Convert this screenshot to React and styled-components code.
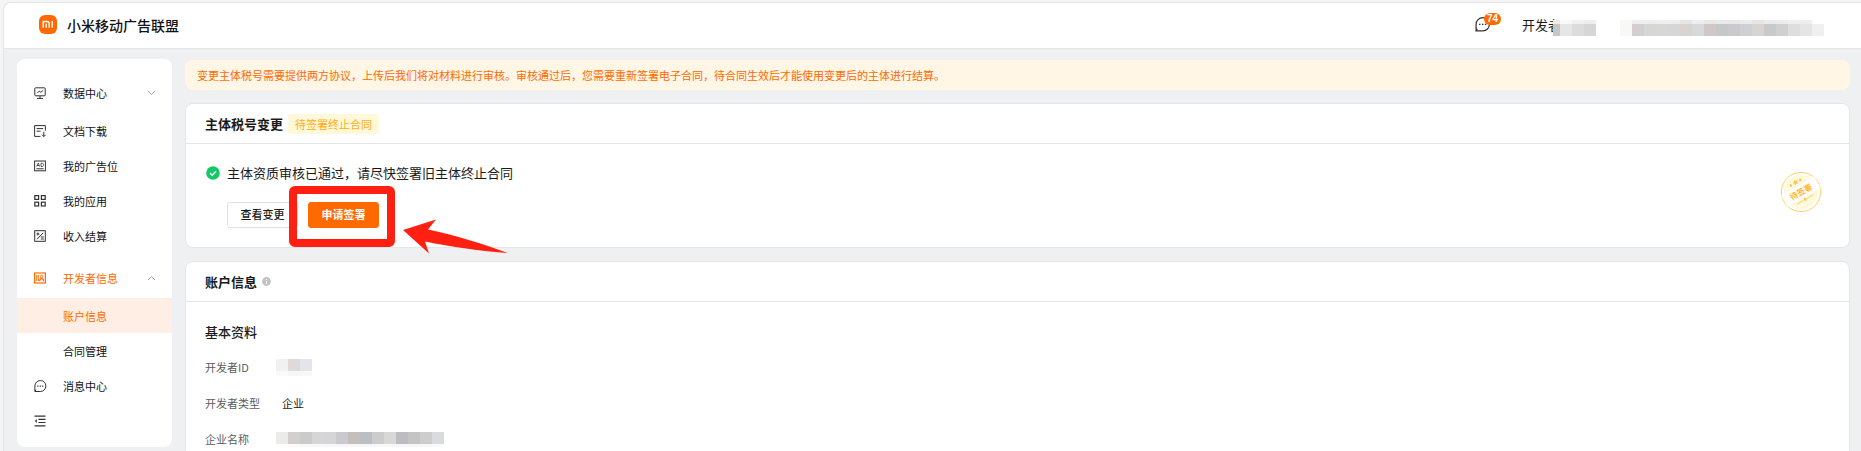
import React, { useState } from "react";
import styled, { createGlobalStyle } from "styled-components";

const GlobalStyle = createGlobalStyle`
  * {
    box-sizing: border-box;
  }
  body {
    margin: 0;
    background: #f5f5f6;
    color: #1a1a1a;
    font-family: "Noto Sans CJK SC", "Noto Sans", sans-serif;
    font-size: 11px;
    line-height: 16px;
  }
  h1, h2, h3, p, ul, dl, dd {
    margin: 0;
    padding: 0;
  }
  button {
    font-family: inherit;
    cursor: pointer;
  }
`;

const Shell = styled.div`
  display: flex;
  flex-direction: column;
  height: 100vh;
  padding: 2px 0 0 3px;
  overflow: hidden;
`;

const Window = styled.div`
  display: flex;
  flex: 1;
  flex-direction: column;
  min-height: 0;
  overflow: hidden;
  background: #eff0f2;
  border: solid #e4e4e6;
  border-width: 1px 0 0 1px;
  border-top-left-radius: 8px;
`;

const Header = styled.header`
  display: flex;
  flex: none;
  align-items: center;
  justify-content: space-between;
  height: 46px;
  padding: 0 37px 2px 35px;
  background: #fff;
  border-bottom: 1px solid #e4e5e7;
`;

const Brand = styled.a`
  display: flex;
  align-items: center;
  gap: 10px;
  color: #111;
  text-decoration: none;
`;

const BrandName = styled.h1`
  font-size: 14px;
  font-weight: 500;
  line-height: 20px;
`;

const HeaderTools = styled.div`
  display: flex;
  align-items: center;
`;

const MessageButton = styled.button`
  position: relative;
  display: flex;
  padding: 0;
  margin-right: 32px;
  color: #333;
  background: none;
  border: 0;
`;

const Badge = styled.span`
  position: absolute;
  top: -4px;
  left: 9px;
  padding: 0 3px;
  border-radius: 6px;
  background: #ff6a00;
  color: #fff;
  font-family: "Liberation Sans", sans-serif;
  font-size: 10px;
  font-weight: 700;
  line-height: 12px;
`;

const Account = styled.div`
  display: flex;
  align-items: center;
  font-size: 13px;

  svg {
    margin-top: 6px;
    margin-left: -8px;
  }
`;

const Company = styled.div`
  display: flex;
  margin-top: 6px;
  margin-left: 24px;
`;

const Body = styled.div`
  display: flex;
  flex: 1;
  align-items: flex-start;
  gap: 13px;
  min-height: 0;
  padding: 10px 11px 0 13px;
`;

const Sidebar = styled.nav`
  flex: none;
  width: 155px;
  padding: 9px 0;
  background: #fff;
  border-radius: 8px;

  ul {
    list-style: none;
  }
`;

const NavGroup = styled.button`
  display: flex;
  align-items: center;
  gap: 17px;
  width: 100%;
  height: 41px;
  margin-top: 4px;
  padding: 0 16px 0 17px;
  border: 0;
  background: none;
  color: ${(props) => (props.$active ? "#ff6a00" : "#111")};
  font-size: 11px;
  text-align: left;

  span {
    flex: 1;
  }
`;

const NavLink = styled.a`
  display: flex;
  align-items: center;
  gap: 17px;
  height: 35px;
  padding-top: 1px;
  padding-left: ${(props) => (props.$sub ? "46px" : "17px")};
  background: ${(props) => (props.$active ? "#ffeee4" : "transparent")};
  color: ${(props) => (props.$active ? "#ff6a00" : "#111")};
  text-decoration: none;
`;

const NavIcon = styled.svg`
  flex: none;
  width: 12px;
  height: 12px;
  overflow: visible;
  color: ${(props) => (props.$active ? "#ff6a00" : "#333")};
`;

const CollapseButton = styled.button`
  display: flex;
  align-items: center;
  width: 100%;
  height: 35px;
  padding: 0 17px;
  border: 0;
  background: none;
`;

const Main = styled.main`
  display: flex;
  flex: 1;
  flex-direction: column;
  align-self: stretch;
  gap: 13px;
  min-width: 0;
`;

const Notice = styled.p`
  flex: none;
  margin-top: 1px;
  padding: 7px 12px;
  border-radius: 8px;
  background: #fff6e6;
  color: #ff6a00;
`;

const Card = styled.section`
  flex: none;
  background: #fff;
  border: 1px solid #e4e5e7;
  border-radius: 8px;
`;

const CardHeader = styled.div`
  display: flex;
  align-items: center;
  gap: 5px;
  height: 40px;
  padding: 0 19px;
  border-bottom: 1px solid #e4e5e7;
`;

const CardTitle = styled.h2`
  font-size: 13px;
  font-weight: 700;
  line-height: 20px;
`;

const Tag = styled.span`
  padding: 2px 7px;
  border-radius: 3px;
  background: #fff8db;
  color: #ffae0d;
`;

const ReviewBody = styled.div`
  display: flex;
  align-items: flex-start;
  justify-content: space-between;
  padding: 19px 27px 19px 20px;
`;

const Status = styled.p`
  display: flex;
  align-items: center;
  gap: 7px;
  font-size: 13px;
  line-height: 20px;
`;

const Actions = styled.div`
  display: flex;
  gap: 10px;
  margin-top: 19px;
  padding-left: 21px;
`;

const Button = styled.button`
  min-width: 71px;
  height: 26px;
  padding: 0 12px 2px;
  border: 1px solid ${(props) => (props.$primary ? "#ff6a00" : "#dfe0e6")};
  border-radius: 3px;
  background: ${(props) => (props.$primary ? "#ff6a00" : "#fff")};
  color: ${(props) => (props.$primary ? "#fff" : "#1a1a1a")};
  font-size: 11px;
  font-weight: ${(props) => (props.$primary ? 700 : 500)};
  line-height: 16px;
`;

const Highlighted = styled.div`
  position: relative;
`;

const HighlightFrame = styled.div`
  position: absolute;
  inset: -16px -16px -19px -19px;
  border: 8px solid #ff2012;
  border-radius: 6px;
  pointer-events: none;
`;

const Arrow = styled.svg`
  position: absolute;
  top: 16px;
  left: 95px;
  z-index: 1;
  pointer-events: none;
`;

const StampBox = styled.div`
  display: flex;
  padding-top: 8px;
`;

const AccountBody = styled.div`
  padding: 20px 19px 0;
`;

const SectionTitle = styled.h3`
  margin-bottom: 7px;
  font-size: 13px;
  font-weight: 500;
  line-height: 20px;
`;

const Field = styled.div`
  display: flex;
  align-items: center;
  height: 36px;
`;

const FieldLabel = styled.dt`
  width: 71px;
  color: #5c5c5c;
`;

const FieldText = styled.dd`
  padding-left: 6px;
`;

const FieldMask = styled.dd`
  display: flex;
`;

const icons = {
  data: (
    <g fill="none" stroke="currentColor">
      <rect x=".8" y=".8" width="10.4" height="8" rx=".8" />
      <path d="M3.4 6l1.8-1.9 1.7 1.2L9.2 3.3M6 9v2M3 11.4h6" />
    </g>
  ),
  download: (
    <g fill="none" stroke="currentColor">
      <path d="M6.5 11.4H.6V.6h10.8v5M2.6 3.6h6.6M2.6 6.2h4M9.8 6.8v4.6M8 9.8l1.8 1.8 1.8-1.8" />
    </g>
  ),
  ad: (
    <g fill="none" stroke="currentColor">
      <rect x=".6" y="1" width="10.8" height="9.8" />
      <path
        d="M2.6 6.6L4.3 3l1.3 3.6M3.2 5.5h2M7 3.2v3.3h1c2 0 2-3.3 0-3.3z"
        strokeWidth=".8"
      />
      <path d="M2.4 8.8h7.2" />
    </g>
  ),
  apps: (
    <g fill="none" stroke="currentColor" strokeWidth="1.2">
      <rect x=".8" y=".6" width="3.8" height="3.8" />
      <rect x="7.4" y=".6" width="3.8" height="3.8" />
      <rect x=".8" y="7.2" width="3.8" height="3.8" />
      <rect x="7.4" y="7.2" width="3.8" height="3.8" />
    </g>
  ),
  income: (
    <g fill="none" stroke="currentColor">
      <rect x=".7" y=".7" width="10.6" height="10.6" />
      <path d="M3 9.2L9.2 2.8M2.4 4h3M3.9 2.5v3M6.8 7h3M6.8 9h3" />
    </g>
  ),
  developer: (
    <g fill="none" stroke="currentColor">
      <rect x=".6" y="1" width="10.8" height="10" strokeWidth="1.2" />
      <path d="M2.6 3v6M4.4 3v6" strokeWidth=".9" />
      <circle cx="7.6" cy="4.6" r="1.3" />
      <path d="M5.6 9.2c.2-3.4 3.8-3.4 4 0" strokeWidth="1.2" />
    </g>
  ),
  message: (
    <g fill="none" stroke="currentColor">
      <path d="M.9 11.3V6a5.5 5.5 0 1 1 5.5 5.5H.9l1-1.8" />
      <path d="M3.3 6.1h1.2M5.8 6.1H7M8.2 6.1h1.2" strokeWidth="1.2" />
    </g>
  ),
  fold: (
    <g fill="none" stroke="currentColor">
      <path d="M.5 1.2h11M4.4 4.4h7.1M4.4 7.5h7.1M.5 10.8h11" strokeWidth="1.2" />
      <path d="M2.8 4L.8 6l2 2z" fill="currentColor" stroke="none" />
    </g>
  ),
};

const Icon = ({ name, active }) => (
  <NavIcon viewBox="0 0 12 12" $active={active} aria-hidden="true">
    {icons[name]}
  </NavIcon>
);

const Chevron = ({ up }) => (
  <svg width="9" height="6" viewBox="0 0 9 6" aria-hidden="true">
    <path
      d={up ? "M1 5l3.5-3.5L8 5" : "M1 1l3.5 3.5L8 1"}
      fill="none"
      stroke="#a4a6ae"
    />
  </svg>
);

// Each row is a list of [width, colour] cells painted left to right.
const Mosaic = ({ width, rows }) => {
  let y = 0;
  const cells = [];
  rows.forEach((row) => {
    let x = row.x || 0;
    row.cells.forEach(([w, fill]) => {
      cells.push(
        <rect key={`${x}-${y}`} x={x} y={y} width={w} height={row.h} fill={fill} />
      );
      x += w;
    });
    y += row.h;
  });
  return (
    <svg width={width} height={y} shapeRendering="crispEdges" aria-hidden="true">
      {cells}
    </svg>
  );
};

const even = (colors) => colors.map((color) => [12, color]);

const accountMask = [
  { h: 4, cells: [[7, "#ececec"], [12, "#f8f8f8"], [12, "#f2f2f2"], [12, "#efefef"]] },
  { h: 12, cells: [[7, "#c6c6c6"], [12, "#e6e6e6"], [12, "#dcdcdc"], [12, "#d5d6d8"]] },
];

const companyMask = [
  {
    h: 4,
    cells: even([
      "#f9faf6", "#f0f0f0", "#efefef", "#f0f0f0", "#efefef", "#e6e6e6", "#efefef",
      "#e8e8e8", "#e9eaea", "#e8e8e8", "#ececec", "#e6e6e6", "#ebebeb", "#ececec",
      "#f0f0f0", "#efefef",
    ]),
  },
  {
    h: 12,
    cells: even([
      "#f8f9f5", "#d4cfcf", "#d5d7d6", "#d7d7d4", "#d6d6d6", "#d8d4d0", "#d8d9db",
      "#cfc8c6", "#c4c8c9", "#cacacd", "#cfd0d3", "#d7d4d2", "#c8c9cb", "#d0d0d1",
      "#dedede", "#e4e5e7", "#f0f0ef",
    ]),
  },
];

const idMask = [
  { h: 12, cells: even(["#f1f1f2", "#dedad7", "#e4e5ea"]) },
  { h: 5, cells: even(["#fafafa", "#f6f6f6", "#f7f7f8"]) },
];

const nameMask = [
  {
    h: 12,
    cells: even([
      "#ebebe9", "#d4cfcf", "#cbcbcb", "#d6d6d6", "#d5d5d7", "#c9c9ce", "#c5bfbc",
      "#b9bfc2", "#cccccc", "#d8d8d8", "#bebcc0", "#c4c4c4", "#cdcdcd", "#dadbde",
    ]),
  },
  {
    h: 3,
    x: 12,
    cells: even([
      "#fbfbfb", "#f8f8f8", "#f8f8f8", "#f7f7f7", "#f7f7f7", "#f7f7f7", "#f6f6f6",
      "#f7f7f7", "#f8f8f8", "#f6f6f6", "#f6f6f6", "#f7f7f7", "#fafafa",
    ]),
  },
];

const links = [
  { id: "docs", label: "文档下载", icon: "download" },
  { id: "slots", label: "我的广告位", icon: "ad" },
  { id: "apps", label: "我的应用", icon: "apps" },
  { id: "income", label: "收入结算", icon: "income" },
];

const subLinks = [
  { id: "account", label: "账户信息" },
  { id: "contract", label: "合同管理" },
];

const Logo = () => (
  <svg width="18" height="19" viewBox="0 0 18 19" aria-hidden="true">
    <rect width="18" height="19" rx="6" fill="#ff6900" />
    <path
      d="M4.2 12.8V6.5h4c1.3 0 2 .7 2 2v4.3M7.2 8.6v4.2M13.2 6v6.8"
      fill="none"
      stroke="#fff"
      strokeWidth="1.4"
    />
  </svg>
);

const CheckMark = () => (
  <svg width="14" height="14" viewBox="0 0 14 14" aria-hidden="true">
    <circle cx="7" cy="7" r="6.8" fill="#14c767" />
    <path d="M4 7.1l2.2 2.1L10 5.3" fill="none" stroke="#fff" strokeWidth="1.4" />
  </svg>
);

const InfoMark = () => (
  <svg width="9" height="9" viewBox="0 0 9 9" aria-hidden="true">
    <circle cx="4.5" cy="4.5" r="4.4" fill="#c2c2c4" />
    <path d="M4.5 1.9v1.2M4.5 3.8v3.2" stroke="#fff" strokeWidth="1.1" />
  </svg>
);

const Stamp = () => (
  <svg width="42" height="42" viewBox="0 0 42 42">
    <circle cx="21" cy="21" r="19.6" fill="#fff" stroke="#ffd166" />
    <circle cx="21" cy="21" r="17" fill="#fff8db" />
    <g transform="rotate(-30 21 21)">
      <rect x="2" y="14.5" width="38" height="12.5" fill="#fff" />
      <text
        x="21"
        y="24"
        textAnchor="middle"
        fontSize="8"
        fontWeight="700"
        fill="#ffb92e"
      >
        待签署
      </text>
      <g fill="#ffc44a">
        <path d="M21 7l.9 1.8 2 .2-1.4 1.4.4 2-1.9-1-1.9 1 .4-2-1.4-1.4 2-.2z" />
        <path d="M15.5 8.6l1.4 1.7-1.4 1.7-1.4-1.7zM26.5 8.6l1.4 1.7-1.4 1.7-1.4-1.7z" />
        <path d="M21 27.6l1.6 1.9-1.6 1.9-1.6-1.9z" />
      </g>
      <path d="M11.5 29.5H19M23 29.5h7.5" stroke="#ffdc8a" strokeWidth="1.2" />
    </g>
  </svg>
);

function App() {
  const [open, setOpen] = useState(true);
  const [current, setCurrent] = useState("account");

  const handleClick = (e, id) => {
    e.preventDefault();
    setCurrent(id);
  };

  return (
    <>
      <GlobalStyle />
      <Shell>
        <Window>
          <Header>
            <Brand href="#home">
              <Logo />
              <BrandName>小米移动广告联盟</BrandName>
            </Brand>
            <HeaderTools>
              <MessageButton type="button">
                <svg width="15" height="15" viewBox="0 0 12.4 12.4" aria-hidden="true">
                  {icons.message}
                </svg>
                <Badge>74</Badge>
              </MessageButton>
              <Account>
                <span>开发者</span>
                <Mosaic width={43} rows={accountMask} />
              </Account>
              <Company>
                <Mosaic width={204} rows={companyMask} />
              </Company>
            </HeaderTools>
          </Header>

          <Body>
            <Sidebar>
              <NavGroup type="button">
                <Icon name="data" />
                <span>数据中心</span>
                <Chevron />
              </NavGroup>
              <ul>
                {links.map((link) => (
                  <li key={link.id}>
                    <NavLink
                      href={`#${link.id}`}
                      $active={current === link.id}
                      onClick={(e) => handleClick(e, link.id)}
                    >
                      <Icon name={link.icon} />
                      {link.label}
                    </NavLink>
                  </li>
                ))}
              </ul>
              <NavGroup
                type="button"
                $active
                aria-expanded={open}
                onClick={() => setOpen(!open)}
              >
                <Icon name="developer" active />
                <span>开发者信息</span>
                <Chevron up={open} />
              </NavGroup>
              {open && (
                <ul>
                  {subLinks.map((link) => (
                    <li key={link.id}>
                      <NavLink
                        href={`#${link.id}`}
                        $sub
                        $active={current === link.id}
                        onClick={(e) => handleClick(e, link.id)}
                      >
                        {link.label}
                      </NavLink>
                    </li>
                  ))}
                </ul>
              )}
              <NavLink
                href="#messages"
                $active={current === "messages"}
                onClick={(e) => handleClick(e, "messages")}
              >
                <Icon name="message" />
                消息中心
              </NavLink>
              <CollapseButton type="button">
                <Icon name="fold" />
              </CollapseButton>
            </Sidebar>

            <Main>
              <Notice>
                变更主体税号需要提供两方协议，上传后我们将对材料进行审核。审核通过后，您需要重新签署电子合同，待合同生效后才能使用变更后的主体进行结算。
              </Notice>

              <Card>
                <CardHeader>
                  <CardTitle>主体税号变更</CardTitle>
                  <Tag>待签署终止合同</Tag>
                </CardHeader>
                <ReviewBody>
                  <div>
                    <Status>
                      <CheckMark />
                      主体资质审核已通过，请尽快签署旧主体终止合同
                    </Status>
                    <Actions>
                      <Button type="button">查看变更</Button>
                      <Highlighted>
                        <Button type="button" $primary>
                          申请签署
                        </Button>
                        <HighlightFrame />
                        <Arrow width="106" height="36" viewBox="0 0 106 36">
                          <path
                            d="M0 12L33 1.5L25 11.5C52 17 80 26 105 35C78 33 48 29 22 23.5L26 35.5Z"
                            fill="#ff2012"
                          />
                        </Arrow>
                      </Highlighted>
                    </Actions>
                  </div>
                  <StampBox>
                    <Stamp />
                  </StampBox>
                </ReviewBody>
              </Card>

              <Card>
                <CardHeader>
                  <CardTitle>账户信息</CardTitle>
                  <InfoMark />
                </CardHeader>
                <AccountBody>
                  <SectionTitle>基本资料</SectionTitle>
                  <dl>
                    <Field>
                      <FieldLabel>开发者ID</FieldLabel>
                      <FieldMask>
                        <Mosaic width={36} rows={idMask} />
                      </FieldMask>
                    </Field>
                    <Field>
                      <FieldLabel>开发者类型</FieldLabel>
                      <FieldText>企业</FieldText>
                    </Field>
                    <Field>
                      <FieldLabel>企业名称</FieldLabel>
                      <FieldMask>
                        <Mosaic width={168} rows={nameMask} />
                      </FieldMask>
                    </Field>
                  </dl>
                </AccountBody>
              </Card>
            </Main>
          </Body>
        </Window>
      </Shell>
    </>
  );
}

export default App;
